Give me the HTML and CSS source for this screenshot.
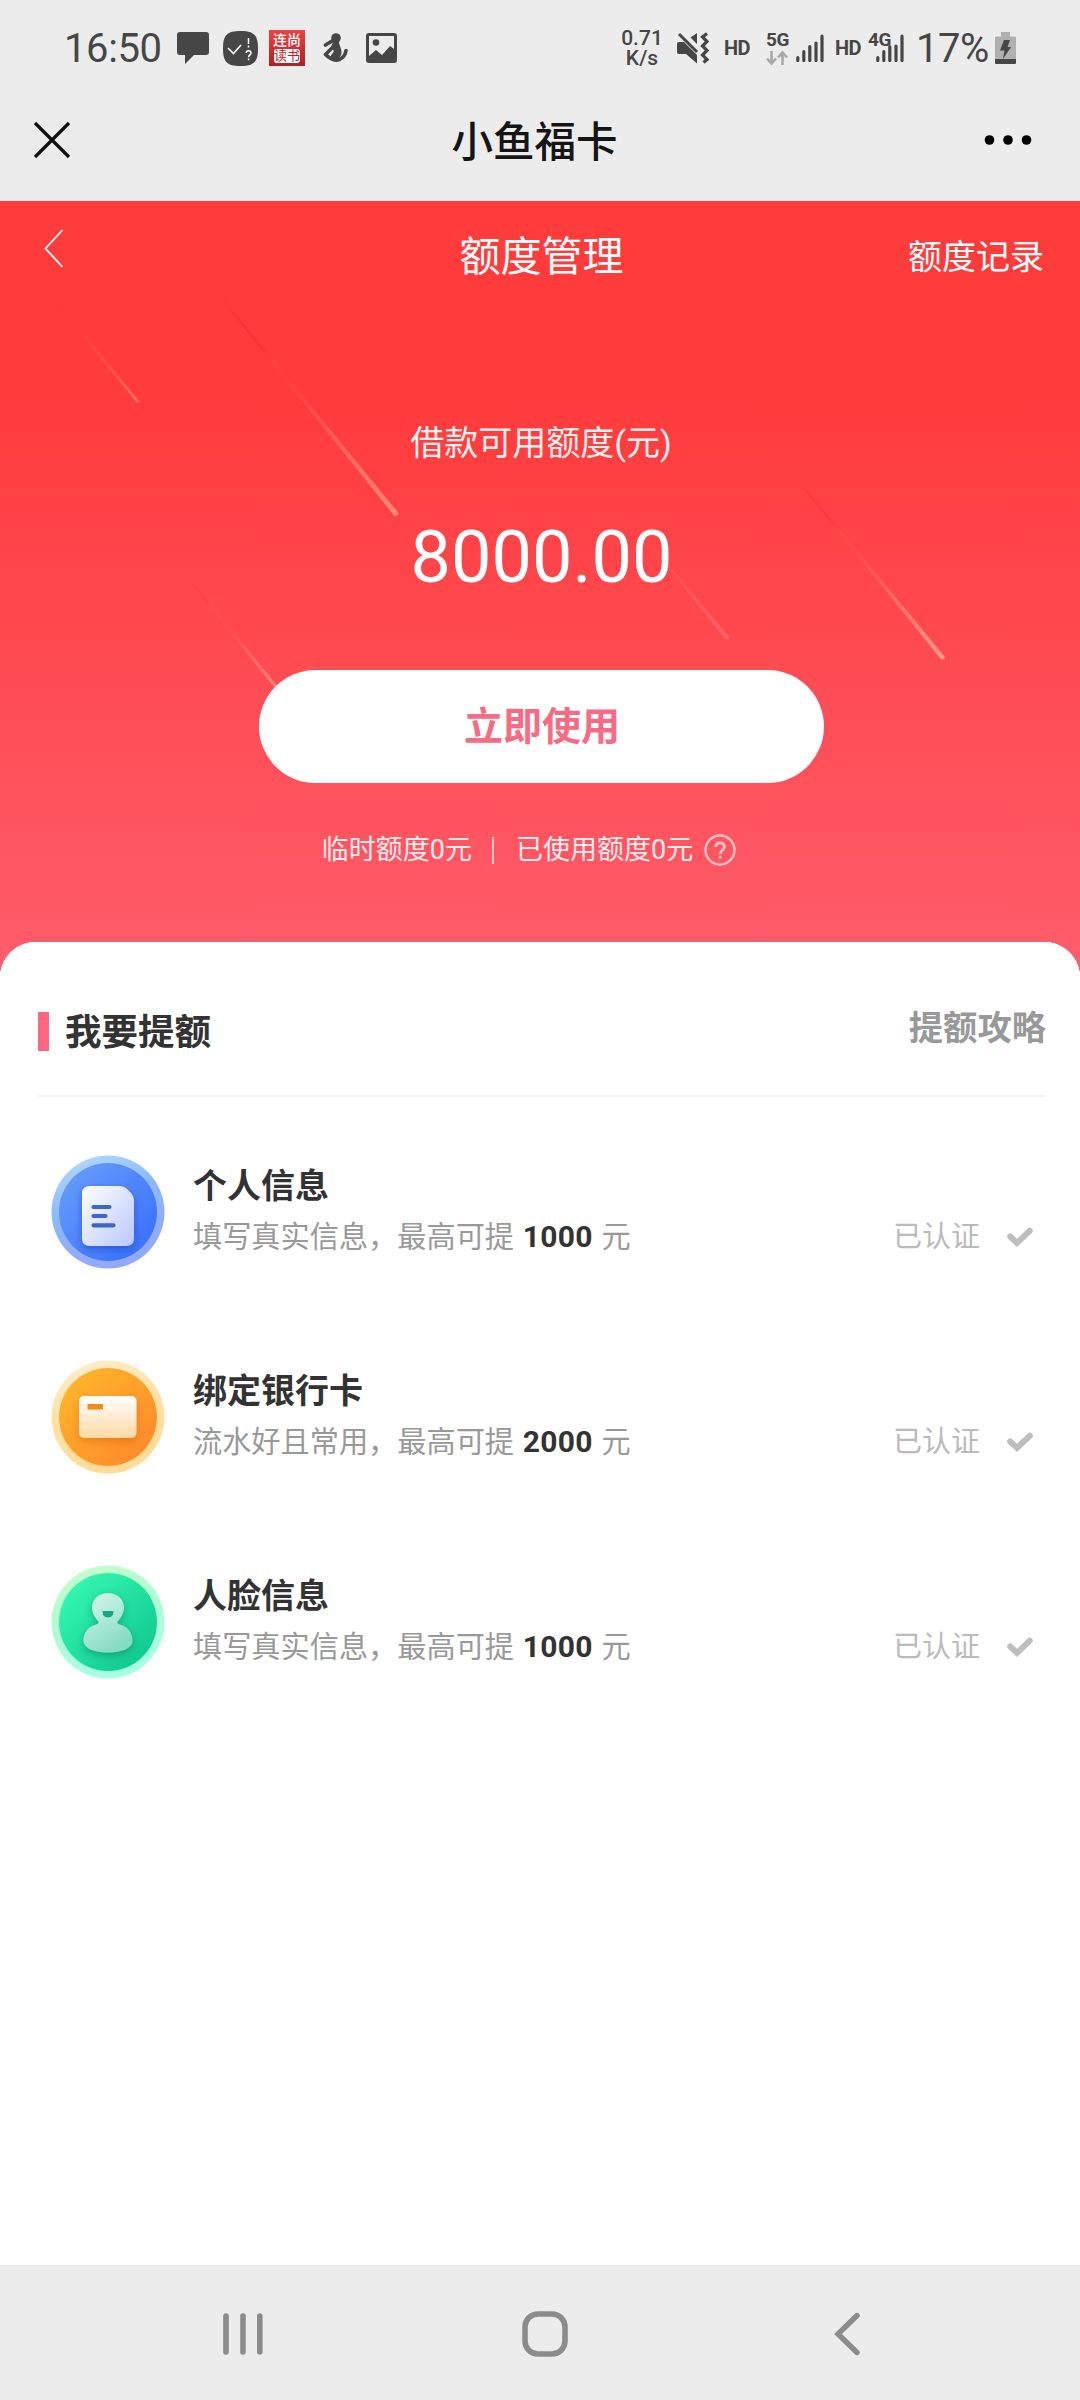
FILE: index.html
```html
<!DOCTYPE html>
<html lang="zh-CN">
<head>
<meta charset="utf-8">
<title>小鱼福卡</title>
<link rel="stylesheet" href="styles.css">
</head>
<body>
<div class="screen">
  <div class="status">
    <div class="status-left">
      <span class="clock">16:50</span>
      <svg class="ic-chat" width="32" height="32" viewBox="0 0 32 32"><path fill="#464646" d="M3 0h26a3 3 0 0 1 3 3v17a3 3 0 0 1-3 3H17l-9 9v-9H3a3 3 0 0 1-3-3V3a3 3 0 0 1 3-3z"/></svg>
      <svg class="ic-quiz" width="35" height="35" viewBox="0 0 35 35"><path fill="#464646" d="M17.500 0C31 0 35 4 35 17.500S31 35 17.500 35 0 31 0 17.500 4 0 17.500 0z"/><path d="M5 17l5.500 5.500L18 14" fill="none" stroke="#fff" stroke-width="1.600"/><path d="M25.500 7v6M25.500 14.500v2M23.200 22c0-3 4.800-3 4.800 0 0 2-2.400 1.800-2.400 4.200M25.600 27.500v1.800" fill="none" stroke="#fff" stroke-width="1.500"/></svg>
      <span class="reader"><span class="reader-a">连尚</span><span class="reader-b">读书</span></span>
      <svg class="ic-person" width="27" height="30" viewBox="0 0 27 30"><circle cx="14" cy="5" r="4.800" fill="#464646"/><path d="M10 8L3.500 12M12 13L3.500 21.500M3.500 21.500c5 5 10 6.500 14 5 4-2 6-5 6.500-9" fill="none" stroke="#464646" stroke-width="3.600" stroke-linecap="round"/><path fill="#464646" d="M11 9h6c0 4 4 8 2 13-2 5-6 6-11 2l4-6-3-4z"/></svg>
      <svg class="ic-image" width="31" height="30" viewBox="0 0 31 30"><path fill="#464646" fill-rule="evenodd" d="M3 0h25a3 3 0 0 1 3 3v24a3 3 0 0 1-3 3H3a3 3 0 0 1-3-3V3a3 3 0 0 1 3-3zM3 3v20l7-6 6 5 8-9 4 3V3z"/><circle cx="10" cy="9.500" r="3.300" fill="#464646"/></svg>
    </div>
    <div class="status-right">
      <span class="speed"><span>0.71</span><span>K/s</span></span>
      <svg class="ic-mute" width="32" height="32" viewBox="0 0 32 32"><path fill="#464646" d="M2 10h5l13 13v8.500L9 22H2a2 2 0 0 1-2-2v-8a2 2 0 0 1 2-2zM20 1v11l-6.500-6.500z"/><path d="M2 2l18 18" stroke="#464646" stroke-width="3"/><path d="M30 1.500l-4.500 3.500 4.500 4.500-4.500 4.500 4.500 4.500-4.500 4.500 4.500 4.500-3.500 3" fill="none" stroke="#464646" stroke-width="3.200"/></svg>
      <span class="hd hd-a">HD</span>
      <span class="net"><span class="gen">5G</span><svg width="22" height="14" viewBox="0 0 22 14"><path d="M5.500 0v12M1 7.500l4.500 5 4.500-5M16.500 14V2M12 6.500l4.500-5 4.500 5" fill="none" stroke="#a8a8a8" stroke-width="2.600"/></svg></span>
      <svg class="ic-bars" width="28" height="28" viewBox="0 0 28 28"><path d="M1.800 23.500v3M7.800 17.500v9M13.800 12.500v14M20 9v17.500M26 2v24.500" stroke="#464646" stroke-width="3.200" stroke-linecap="round"/></svg>
      <span class="hd hd-b">HD</span>
      <span class="net4"><span class="gen">4G</span><svg class="bars4" width="28" height="28" viewBox="0 0 28 28"><path d="M1.800 23.500v3M7.800 17.500v9M13.800 12.500v14M20 12v14.500M26 2v24.500" stroke="#464646" stroke-width="3.200" stroke-linecap="round"/></svg></span>
      <span class="pct">17%</span>
      <svg class="ic-batt" width="21" height="32" viewBox="0 0 21 32"><path fill="#b0b0b0" d="M6 0h9v4.500h5l1 1V32H0V5.500l1-1h5z"/><path fill="#464646" d="M0 27h21v4l-1 1H1l-1-1zM9 8h6l-2.500 7H16L8 27l1.500-8.500H5z"/></svg>
    </div>
  </div>

  <div class="appbar">
    <svg width="38" height="38" viewBox="0 0 38 38"><path d="M2 2l34 34M36 2L2 36" stroke="#111" stroke-width="3.200"/></svg>
    <h1 class="app-title">小鱼福卡</h1>
    <svg width="48" height="12" viewBox="0 0 48 12"><circle cx="5.500" cy="6" r="4.800"/><circle cx="24" cy="6" r="4.800"/><circle cx="42.500" cy="6" r="4.800"/></svg>
  </div>

  <section class="hero">
    <svg class="streaks" width="1080" height="741" viewBox="0 201 1080 741">
      <defs>
        <linearGradient id="s1" gradientUnits="userSpaceOnUse" x1="48" y1="292" x2="138" y2="402"><stop offset="0" stop-color="#f5303a" stop-opacity="0"/><stop offset=".15" stop-color="#f5303a" stop-opacity=".3"/><stop offset=".35" stop-color="#ff6a60" stop-opacity=".1"/><stop offset="1" stop-color="#ff8a78" stop-opacity=".65"/></linearGradient>
        <linearGradient id="s2" gradientUnits="userSpaceOnUse" x1="217" y1="293" x2="398" y2="515"><stop offset="0" stop-color="#f5303a" stop-opacity="0"/><stop offset=".15" stop-color="#f42c36" stop-opacity=".7"/><stop offset=".25" stop-color="#f42e38" stop-opacity=".6"/><stop offset=".37" stop-color="#ff6a60" stop-opacity=".1"/><stop offset=".75" stop-color="#ff8075" stop-opacity=".65"/><stop offset="1" stop-color="#ff8a78"/></linearGradient>
        <linearGradient id="s3" gradientUnits="userSpaceOnUse" x1="193" y1="584" x2="282" y2="694"><stop offset="0" stop-color="#f5303a" stop-opacity="0"/><stop offset=".15" stop-color="#f83c46" stop-opacity=".7"/><stop offset=".35" stop-color="#ff7a70" stop-opacity=".1"/><stop offset="1" stop-color="#ff9088"/></linearGradient>
        <linearGradient id="s4" gradientUnits="userSpaceOnUse" x1="797" y1="479" x2="944" y2="659"><stop offset="0" stop-color="#f5303a" stop-opacity="0"/><stop offset=".15" stop-color="#f6323c" stop-opacity=".7"/><stop offset=".25" stop-color="#f6343e" stop-opacity=".5"/><stop offset=".37" stop-color="#ff7a70" stop-opacity=".1"/><stop offset=".75" stop-color="#ff8a80" stop-opacity=".7"/><stop offset="1" stop-color="#ff9a90"/></linearGradient>
        <linearGradient id="s5" gradientUnits="userSpaceOnUse" x1="590" y1="470" x2="728" y2="639"><stop offset=".4" stop-color="#ff7078" stop-opacity="0"/><stop offset="1" stop-color="#ff7078" stop-opacity=".7"/></linearGradient>
      </defs>
      <path fill="url(#s1)" d="M48.500 291.500L139.200 401q0 2-2.500 1.500L47.500 292.500z"/>
      <path fill="url(#s2)" d="M217 291.500L398.500 513q-.5 3.500-4.500 2.500L215.500 292.500z"/>
      <path fill="url(#s3)" d="M193.500 583.500L283 693l-2.500 2L192.500 584.500z"/>
      <path fill="url(#s4)" d="M797.500 478.500L945 657q-.5 3-3.800 2.500L796.300 479.500z"/>
      <path fill="url(#s5)" d="M590 470L729 637q-.5 3-3.500 2z"/>
    </svg>
    <div class="hero-nav">
      <svg class="hero-back" width="20" height="39" viewBox="0 0 20 39"><path d="M18.500 1L1.500 19.500l17 18.500" fill="none" stroke="#fff" stroke-width="1.800"/></svg>
      <h2 class="hero-title">额度管理</h2>
      <a class="hero-link">额度记录</a>
    </div>
    <p class="quota-label">借款可用额度(元)</p>
    <p class="quota">8000.00</p>
    <button class="use-btn">立即使用</button>
    <div class="quota-meta">
      <span>临时额度0元</span><i class="sep"></i><span>已使用额度0元</span>
      <svg width="32" height="32" viewBox="0 0 32 32" fill="none" stroke="#ffc2c8"><circle cx="16" cy="16" r="14.500" stroke-width="2.400"/><path d="M11.800 13c0-5.600 8.600-5.600 8.600 0 0 3-4.200 3.200-4.200 7M16.200 21.800v2.600" stroke-width="2.800"/></svg>
    </div>
  </section>

  <section class="panel">
    <div class="panel-head">
      <i class="mark"></i><h3 class="panel-title">我要提额</h3><a class="guide">提额攻略</a>
    </div>
    <ul class="tasks">
      <li class="task">
        <svg class="badge" width="114" height="114" viewBox="0 0 114 114">
          <defs>
            <linearGradient id="b1" x1="0" y1="0" x2=".4" y2="1"><stop stop-color="#b8e0ff"/><stop offset=".5" stop-color="#8db8fb"/><stop offset="1" stop-color="#93a8ff"/></linearGradient>
            <linearGradient id="b2" x1="0" y1="0" x2="1" y2="1"><stop offset=".1" stop-color="#659bfb"/><stop offset=".9" stop-color="#3a70ff"/></linearGradient>
            <linearGradient id="b3" x1="0" y1="0" x2="1" y2="1"><stop stop-color="#fff"/><stop offset="1" stop-color="#b9c7ff"/></linearGradient>
            <filter id="sh" x="-30%" y="-30%" width="160%" height="170%"><feDropShadow dx="0" dy="3" stdDeviation="3.500" flood-color="#102a90" flood-opacity=".4"/></filter>
          </defs>
          <circle cx="57" cy="57" r="56.500" fill="url(#b1)"/><circle cx="57" cy="57" r="49" fill="url(#b2)"/>
          <path filter="url(#sh)" fill="url(#b3)" d="M39 31h29q5 0 8 3l4 4q3 3 3 7v38q0 8-8 8H39q-8 0-8-8V39q0-8 8-8z"/>
          <path d="M42.500 52h16M42.500 61h12M42.500 70.300h20" stroke="#3b66cc" stroke-width="4.200" stroke-linecap="round"/>
        </svg>
        <div class="task-text"><h4>个人信息</h4><p>填写真实信息，最高可提 <b>1000</b> 元</p></div>
        <span class="state">已认证</span>
        <svg class="tick" width="26" height="20" viewBox="0 0 26 20"><path d="M3.200 9.500L10 15.800 22.800 3.800" fill="none" stroke="#bebebe" stroke-width="6" stroke-linecap="round"/></svg>
      </li>
      <li class="task">
        <svg class="badge" width="114" height="114" viewBox="0 0 114 114">
          <defs>
            <linearGradient id="o1" x1="0" y1="0" x2=".3" y2="1"><stop stop-color="#ffeed0"/><stop offset=".5" stop-color="#ffe2a4"/><stop offset="1" stop-color="#ffdd98"/></linearGradient>
            <linearGradient id="o2" x1="0" y1="0" x2="1" y2="1"><stop offset=".1" stop-color="#ffb52b"/><stop offset=".9" stop-color="#ff8a2b"/></linearGradient>
            <linearGradient id="o3" x1="0" y1="0" x2="0" y2="1"><stop stop-color="#fff"/><stop offset="1" stop-color="#ffd9a3"/></linearGradient>
            <filter id="so" x="-30%" y="-30%" width="160%" height="180%"><feDropShadow dx="0" dy="4" stdDeviation="4" flood-color="#c04800" flood-opacity=".35"/></filter>
          </defs>
          <circle cx="57" cy="57" r="56.500" fill="url(#o1)"/><circle cx="57" cy="57" r="49" fill="url(#o2)"/>
          <rect filter="url(#so)" x="28" y="36" width="57.500" height="42" rx="5" fill="url(#o3)"/><rect x="36.500" y="44" width="15.500" height="5.500" fill="#ee8c20"/>
        </svg>
        <div class="task-text"><h4>绑定银行卡</h4><p>流水好且常用，最高可提 <b>2000</b> 元</p></div>
        <span class="state">已认证</span>
        <svg class="tick" width="26" height="20" viewBox="0 0 26 20"><path d="M3.200 9.500L10 15.800 22.800 3.800" fill="none" stroke="#bebebe" stroke-width="6" stroke-linecap="round"/></svg>
      </li>
      <li class="task">
        <svg class="badge" width="114" height="114" viewBox="0 0 114 114">
          <defs>
            <linearGradient id="g1" x1="0" y1="0" x2=".3" y2="1"><stop stop-color="#c8ffc8"/><stop offset=".5" stop-color="#b0fcd4"/><stop offset="1" stop-color="#a8ffe4"/></linearGradient>
            <linearGradient id="g2" x1="0" y1="0" x2="1" y2="1"><stop offset=".1" stop-color="#34f8b0"/><stop offset=".9" stop-color="#10c890"/></linearGradient>
            <linearGradient id="g3" x1="0" y1="0" x2=".5" y2="1"><stop stop-color="#d8f8f0"/><stop offset="1" stop-color="#86dcc0"/></linearGradient>
            <filter id="sg" x="-30%" y="-30%" width="160%" height="180%"><feDropShadow dx="0" dy="3" stdDeviation="4" flood-color="#006848" flood-opacity=".45"/></filter>
          </defs>
          <circle cx="57" cy="57" r="56.500" fill="url(#g1)"/><circle cx="57" cy="57" r="49" fill="url(#g2)"/>
          <path filter="url(#sg)" fill="url(#g3)" d="M57 28c9.500 0 16 6.500 16 14.500 0 6-3.500 10.500-6 13.500-1.500 2 0 3 3 4 7 2 11.500 8 11.500 15.500 0 8-11 12-24.500 12s-24.500-4-24.500-12C32.500 68 37 62 44 60c3-1 4.500-2 3-4-2.500-3-6-7.500-6-13.500C41 34.500 47.500 28 57 28z"/>
          <path fill="#14a885" d="M51.500 46h11q0 6.500-5.500 6.500T51.500 46z"/>
        </svg>
        <div class="task-text"><h4>人脸信息</h4><p>填写真实信息，最高可提 <b>1000</b> 元</p></div>
        <span class="state">已认证</span>
        <svg class="tick" width="26" height="20" viewBox="0 0 26 20"><path d="M3.200 9.500L10 15.800 22.800 3.800" fill="none" stroke="#bebebe" stroke-width="6" stroke-linecap="round"/></svg>
      </li>
    </ul>
  </section>

  <div class="navbar">
    <svg width="42" height="44" viewBox="0 0 42 44"><path d="M4 4v36M21 4v36M37.800 4v36" stroke="#8b8b8b" stroke-width="5.600" stroke-linecap="round"/></svg>
    <svg class="nav-home" width="46" height="46" viewBox="0 0 46 46"><rect x="3" y="3" width="40" height="40" rx="13" fill="none" stroke="#8b8b8b" stroke-width="5.600"/></svg>
    <svg width="26" height="44" viewBox="0 0 26 44"><path d="M23 3.500L4 22l19 18.500" fill="none" stroke="#8b8b8b" stroke-width="5.400" stroke-linecap="round"/></svg>
  </div>
</div>
</body>
</html>
```
FILE: styles.css
```css
* { box-sizing: border-box; margin: 0; padding: 0; }
body { width: 1080px; background: #fff; font-family: Roboto, "Noto Sans CJK SC", sans-serif; }
svg { display: block; flex: none; }
.screen { width: 1080px; height: 2400px; display: flex; flex-direction: column; overflow: hidden; }

.status { height: 96px; background: #ececec; color: #464646; display: flex; justify-content: space-between; padding: 0 64px 0 64px; white-space: nowrap; }
.status-left, .status-right { display: flex; align-items: center; height: 96px; }
.clock { font-size: 40px; line-height: 48px; width: 113px; letter-spacing: -.4px; padding-top: 2px; }
.ic-quiz { margin-left: 14px; }
.reader { margin-left: 11px; width: 36px; height: 36px; background: linear-gradient(#ee4344, #b02024); display: flex; flex-direction: column; align-items: center; padding-top: 3px; color: #fff; font-size: 14px; line-height: 15px; font-weight: 500; }
.reader-b { margin-top: 1px; font-size: 13px; line-height: 14px; height: 14px; background: #fff; color: #b82428; border-radius: 3px; font-weight: 400; }
.ic-person { margin-left: 17px; }
.ic-image { margin-left: 17px; }

.speed { width: 40px; display: flex; flex-direction: column; align-items: center; font-size: 21px; line-height: 20px; font-weight: 500; }
.ic-mute { margin-left: 15px; }
.hd { font-size: 20px; line-height: 24px; font-weight: 700; width: 28px; letter-spacing: -.6px; }
.hd-a { margin-left: 15px; }
.net { margin-left: 14px; width: 24px; height: 34px; display: flex; flex-direction: column; justify-content: space-between; }
.gen { font-size: 19px; line-height: 18px; font-weight: 700; letter-spacing: -.5px; }
.ic-bars { margin-left: 6px; }
.hd-b { margin-left: 11px; }
.net4 { margin-left: 5px; width: 36px; height: 34px; position: relative; display: flex; }
.bars4 { position: absolute; right: 0; bottom: 3px; }
.pct { margin-left: 12px; font-size: 40px; line-height: 48px; width: 79px; letter-spacing: -.5px; padding-top: 2px; }

.appbar { height: 105px; background: #ececec; display: flex; align-items: center; justify-content: space-between; padding: 0 48px 17px 33px; }
.app-title { font-size: 41.500px; line-height: 60px; font-weight: 500; color: #151515; margin: 5px 0 0 14px; }

.hero { height: 741px; position: relative; background: linear-gradient(#ff3c3c 0, #ff3b3b 190px, #ff5d6c 770px); color: #fff; display: flex; flex-direction: column; align-items: center; }
.streaks { position: absolute; left: 0; top: 0; }
.hero > :not(.streaks) { position: relative; }
.hero-nav { width: 1080px; height: 112px; padding: 0 36px 0 44px; display: grid; grid-template-columns: 136px 1fr 136px; align-items: center; }
.hero-back { margin-bottom: 17px; }
.hero-title { font-size: 41px; line-height: 60px; font-weight: 400; text-align: center; padding-right: 5px; }
.hero-link { font-size: 34px; line-height: 50px; white-space: nowrap; }
.quota-label { margin-top: 105px; font-size: 34px; line-height: 50px; color: #fff0f0; padding-left: 2px; }
.quota { margin-top: 45px; font-size: 72px; line-height: 90px; padding-left: 3px; }
.use-btn { margin: 67px 0 0 2px; width: 565px; height: 113px; border: 0; border-radius: 57px; background: #fff; color: #f76b83; font: 700 39px/1 "Noto Sans CJK SC", sans-serif; padding: 0 0 6px 2px; }
.quota-meta { margin-top: 47px; display: flex; align-items: center; font-size: 27px; line-height: 40px; color: #ffecee; margin-right: 22px; }
.sep { width: 2px; height: 27px; background: #ffc2c8; margin: 0 22px 0 20px; }
.quota-meta svg { margin-left: 11px; }

.panel { flex: 1; position: relative; }
.panel::before { content: ""; position: absolute; left: 0; top: 0; width: 100%; height: 36px; background: radial-gradient(circle at 36px 36px, transparent 36px, #ff5d6c 36.500px) 0 0 / 36px 36px no-repeat, radial-gradient(circle at 0 36px, transparent 36px, #ff5d6c 36.500px) 100% 0 / 36px 36px no-repeat; }
.panel-head { margin: 0 34px 0 38px; height: 155px; border-bottom: 2px solid #f6f6f6; display: flex; align-items: center; padding-top: 26px; }
.mark { width: 11px; height: 39px; background: #ff6680; }
.panel-title { margin-left: 16px; font-size: 36.500px; line-height: 50px; font-weight: 700; color: #333; padding-top: 2px; }
.guide { margin-left: auto; padding-bottom: 7px; font-size: 34.300px; line-height: 50px; font-weight: 700; color: #999; }
.tasks { list-style: none; padding: 12px 47px 0 51px; }
.task { height: 205px; display: flex; align-items: center; }
.task-text { margin-left: 28px; padding-bottom: 3px; flex: 1; white-space: nowrap; }
.task-text h4 { font-size: 34px; line-height: 50px; font-weight: 700; color: #333; }
.task-text p { font-size: 29.200px; line-height: 44px; margin-top: 4px; color: #999; }
.task-text b { font-weight: 700; font-size: 30px; letter-spacing: .3px; color: #333; margin: 0 1.500px; }
.state { font-size: 29px; line-height: 44px; color: #bbb; margin: 51px 27px 0 0; }
.tick { margin-top: 50px; }

.navbar { height: 135px; background: #ececec; display: flex; align-items: center; justify-content: space-between; padding: 3px 220px 0 222px; }
.nav-home { margin-right: 9px; }
```
